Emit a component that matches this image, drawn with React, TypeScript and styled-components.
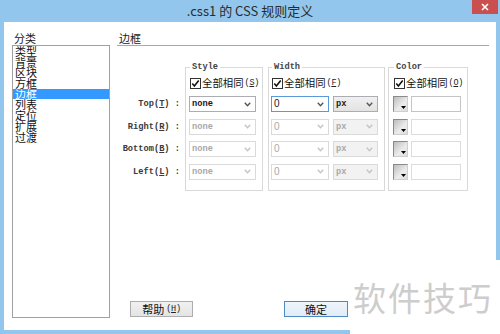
import React from "react";
import styled, { createGlobalStyle } from "styled-components";

const CJK = `"Noto Sans CJK SC", "Noto Sans", sans-serif`;
const MONO = `"Liberation Mono", "DejaVu Sans Mono", monospace`;
const SANS = `"Liberation Sans", Arial, sans-serif`;

const GlobalStyle = createGlobalStyle`
  html, body { margin: 0; padding: 0; background: #fff; }
  body { font-family: ${CJK}; }
  * { box-sizing: border-box; }
`;

const Window = styled.div`
  position: relative;
  width: 500px;
  height: 334px;
  display: flex;
  flex-direction: column;
  background: #92c6ec;
  overflow: hidden;
`;

const TitleBar = styled.div`
  height: 22px;
  flex: none;
  display: grid;
  grid-template-columns: 1fr auto 1fr;
  align-items: center;
`;

const Title = styled.div`
  grid-column: 2;
  font: 13px/22px ${CJK};
  color: #2b2b2b;
  white-space: nowrap;
`;

const CloseButton = styled.div`
  grid-column: 3;
  justify-self: end;
  align-self: start;
  width: 26px;
  height: 14px;
  margin-right: 2px;
  background: #c9504f;
  display: flex;
  align-items: center;
  justify-content: center;
`;

const Frame = styled.div`
  flex: 1;
  min-height: 0;
  display: flex;
  padding: 0 4px 4px 4px;
`;

const Client = styled.div`
  flex: 1;
  background: #fff;
  display: grid;
  grid-template-columns: 98px 1fr;
  column-gap: 7px;
  padding: 9px 7px 12px 8px;
`;

const Column = styled.div`
  display: flex;
  flex-direction: column;
  min-height: 0;
`;

const PaneLabel = styled.div`
  font: 11px/14px ${CJK};
  color: #1a1a1a;
  height: 14px;
  padding-left: 2px;
`;

const Heading = styled.div`
  font: 11px/14px ${CJK};
  color: #1a1a1a;
  height: 15px;
  padding-left: 2px;
  border-bottom: 1px solid #a8a8a8;
`;

const CategoryList = styled.div`
  flex: 1;
  border: 1px solid #a0a0a0;
  background: #fff;
  overflow: hidden;
`;

const CategoryItem = styled.div<{ $selected?: boolean }>`
  font: 11px/10.7px ${CJK};
  height: 10.7px;
  padding-left: 2px;
  white-space: nowrap;
  color: ${(p) => (p.$selected ? "#fff" : "#111")};
  background: ${(p) => (p.$selected ? "#3399ff" : "transparent")};
`;

const GroupArea = styled.div`
  display: flex;
  align-items: flex-start;
  margin-top: 16px;
`;

const LabelColumn = styled.div`
  width: 66px;
  margin-right: 2px;
  padding-top: 34px;
  padding-right: 3px;
  display: flex;
  flex-direction: column;
  gap: 6.5px;
`;

const RowLabel = styled.div`
  height: 16px;
  font: bold 8.7px/16px ${MONO};
  color: #3a3a3a;
  text-align: right;
  white-space: pre;
`;

const Group = styled.fieldset<{ $w: number; $pl: number; $mr: number }>`
  width: ${(p) => p.$w}px;
  flex: none;
  margin: 0 ${(p) => p.$mr}px 0 0;
  min-width: 0;
  border: 1px solid #d9d9d9;
  padding: 0 6px 10px ${(p) => p.$pl}px;
  display: flex;
  flex-direction: column;
  gap: 6.5px;
`;

const Legend = styled.legend`
  font: bold 8.7px/10px ${MONO};
  color: #444;
  padding: 0 2px;
  margin-left: 1px;
  height: 10px;
`;

const CheckRow = styled.div`
  display: flex;
  align-items: center;
  gap: 1px;
  height: 12px;
  margin-top: 5px;
  margin-bottom: 0.5px;
  padding-left: 1px;
  white-space: nowrap;
`;

const CheckBoxIcon = styled.svg`
  flex: none;
  width: 11px;
  height: 11px;
`;

const CheckText = styled.span`
  font: 10.4px/12px ${CJK};
  color: #111;
`;

const Mnemonic = styled.span`
  font: 8.5px/12px ${MONO};
  color: #222;
  letter-spacing: -0.3px;
`;

const ControlRow = styled.div<{ $gap: number }>`
  display: flex;
  gap: ${(p) => p.$gap}px;
  height: 16px;
`;

type SelectState = "active" | "focused" | "disabled";

const SelectBox = styled.div<{ $w: number; $state: SelectState; $button?: boolean }>`
  width: ${(p) => p.$w}px;
  flex: none;
  height: 16px;
  display: flex;
  align-items: center;
  justify-content: space-between;
  padding: 0 4px 0 2px;
  border: 1px solid
    ${(p) =>
      p.$state === "focused" ? "#5a9ad8" : p.$state === "disabled" ? "#dadada" : "#abadb3"};
  background: ${(p) =>
    p.$button
      ? p.$state === "disabled"
        ? "#f2f2f2"
        : "linear-gradient(#f0f0f0, #e3e3e3)"
      : "#fff"};
  color: ${(p) => (p.$state === "disabled" ? "#a9a9a9" : "#1a1a1a")};
`;

const SelectText = styled.span<{ $sans?: boolean }>`
  font: ${(p) => (p.$sans ? `10px/14px ${SANS}` : `bold 8.7px/14px ${MONO}`)};
`;

const Swatch = styled.div`
  width: 15px;
  height: 16px;
  flex: none;
  display: flex;
  align-items: flex-end;
  justify-content: flex-end;
  padding: 0 1px 2px 0;
  border: 1px solid;
  border-color: #8a8a8a #cfcfcf #cfcfcf #8a8a8a;
  background: linear-gradient(135deg, #bdbdbd, #ececec 60%, #dcdcdc);
`;

const ColorInput = styled.div<{ $disabled?: boolean }>`
  width: 50px;
  flex: none;
  height: 16px;
  border: 1px solid ${(p) => (p.$disabled ? "#dcdcdc" : "#c4c4c4")};
  background: #fff;
`;

const Spacer = styled.div`
  flex: 1;
`;

const ButtonRow = styled.div`
  display: flex;
  gap: 91px;
  padding-left: 13px;
  margin-bottom: 1px;
`;

const DialogButton = styled.div<{ $default?: boolean }>`
  width: ${(p) => (p.$default ? 64 : 63)}px;
  height: 16px;
  display: flex;
  align-items: center;
  justify-content: center;
  gap: 2px;
  border: 1px solid ${(p) => (p.$default ? "#4a8ac6" : "#adadad")};
  background: ${(p) =>
    p.$default ? "linear-gradient(#eef5fb, #e1ecf6)" : "linear-gradient(#f1f1f1, #e4e4e4)"};
  font: 11px/14px ${CJK};
  color: #111;
`;

const Watermark = styled.div`
  position: absolute;
  left: 350px;
  top: 260px;
  width: 150px;
  height: 74px;
  background: #fff;
  padding: 19px 0 0 3px;
  font: 33px/36px ${CJK};
  letter-spacing: 2px;
  color: #cdcdcd;
  white-space: nowrap;
`;

const Chevron = ({ disabled }: { disabled?: boolean }) => (
  <svg width="7" height="5" viewBox="0 0 7 5">
    <polyline
      points="0.8,0.8 3.5,3.8 6.2,0.8"
      fill="none"
      stroke={disabled ? "#c4c4c4" : "#555"}
      strokeWidth="1.4"
    />
  </svg>
);

const CheckIcon = () => (
  <CheckBoxIcon viewBox="0 0 11 11">
    <rect x="0.5" y="0.5" width="10" height="10" fill="#fff" stroke="#333" />
    <polyline points="2.3,5.4 4.4,7.9 8.7,2.6" fill="none" stroke="#111" strokeWidth="1.6" />
  </CheckBoxIcon>
);

const ArrowIcon = () => (
  <svg width="5" height="3" viewBox="0 0 5 3">
    <polygon points="0,0 5,0 2.5,3" fill="#000" />
  </svg>
);

const Select = ({
  w,
  state,
  value,
  button,
  sans,
}: {
  w: number;
  state: SelectState;
  value: string;
  button?: boolean;
  sans?: boolean;
}) => (
  <SelectBox $w={w} $state={state} $button={button}>
    <SelectText $sans={sans}>{value}</SelectText>
    <Chevron disabled={state === "disabled"} />
  </SelectBox>
);

const Check = ({ k }: { k: string }) => (
  <CheckRow>
    <CheckIcon />
    <CheckText>全部相同</CheckText>
    <Mnemonic>
      (<u>{k}</u>)
    </Mnemonic>
  </CheckRow>
);

const categories = ["类型", "背景", "区块", "方框", "边框", "列表", "定位", "扩展", "过渡"];

const rows = [
  { name: "Top", key: "T" },
  { name: "Right", key: "R" },
  { name: "Bottom", key: "B" },
  { name: "Left", key: "L" },
];

export default function App() {
  return (
    <>
      <GlobalStyle />
      <Window>
        <TitleBar>
          <Title>.css1 的 CSS 规则定义</Title>
          <CloseButton>
            <svg width="8" height="8" viewBox="0 0 8 8">
              <path d="M1 1 L7 7 M7 1 L1 7" stroke="#fff" strokeWidth="1.6" />
            </svg>
          </CloseButton>
        </TitleBar>
        <Frame>
          <Client>
            <Column>
              <PaneLabel>分类</PaneLabel>
              <CategoryList>
                {categories.map((c) => (
                  <CategoryItem key={c} $selected={c === "边框"}>
                    {c}
                  </CategoryItem>
                ))}
              </CategoryList>
            </Column>
            <Column>
              <Heading>边框</Heading>
              <GroupArea>
                <LabelColumn>
                  {rows.map((r) => (
                    <RowLabel key={r.name}>
                      {r.name}(<u>{r.key}</u>) :
                    </RowLabel>
                  ))}
                </LabelColumn>
                <Group $w={78} $pl={3} $mr={5}>
                  <Legend>Style</Legend>
                  <Check k="S" />
                  {rows.map((r, i) => (
                    <ControlRow key={r.name} $gap={4}>
                      <Select w={67} state={i === 0 ? "active" : "disabled"} value="none" />
                    </ControlRow>
                  ))}
                </Group>
                <Group $w={117} $pl={2} $mr={3}>
                  <Legend>Width</Legend>
                  <Check k="F" />
                  {rows.map((r, i) => (
                    <ControlRow key={r.name} $gap={4}>
                      <Select w={58} state={i === 0 ? "focused" : "disabled"} value="0" sans />
                      <Select w={45} state={i === 0 ? "active" : "disabled"} value="px" button />
                    </ControlRow>
                  ))}
                </Group>
                <Group $w={80} $pl={4} $mr={0}>
                  <Legend>Color</Legend>
                  <Check k="O" />
                  {rows.map((r, i) => (
                    <ControlRow key={r.name} $gap={3}>
                      <Swatch>
                        <ArrowIcon />
                      </Swatch>
                      <ColorInput $disabled={i > 0} />
                    </ControlRow>
                  ))}
                </Group>
              </GroupArea>
              <Spacer />
              <ButtonRow>
                <DialogButton>
                  帮助
                  <Mnemonic>
                    (<u>H</u>)
                  </Mnemonic>
                </DialogButton>
                <DialogButton $default>确定</DialogButton>
              </ButtonRow>
            </Column>
          </Client>
        </Frame>
        <Watermark>软件技巧</Watermark>
      </Window>
    </>
  );
}
